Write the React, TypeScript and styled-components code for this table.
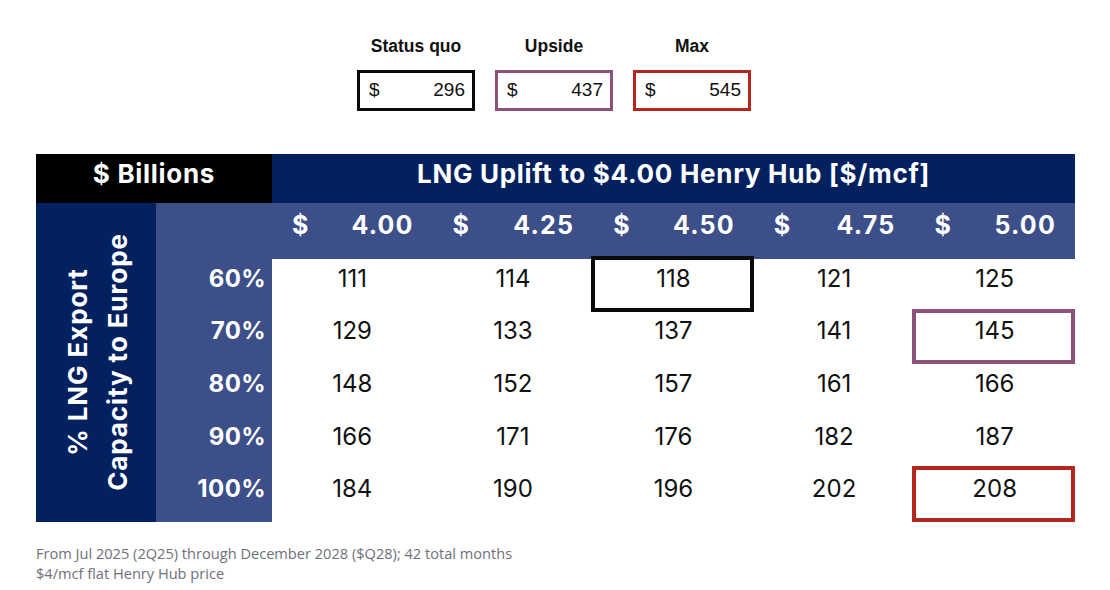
import React from 'react';
import styled, { createGlobalStyle } from 'styled-components';

const GlobalStyle = createGlobalStyle`
  html, body {
    margin: 0;
    padding: 0;
    background: #ffffff;
  }
  body {
    font-family: Inter, "Liberation Sans", sans-serif;
  }
`;

const Page = styled.div`
  width: 1110px;
  height: 590px;
  box-sizing: border-box;
  padding: 36px 0 0 36px;
  display: flex;
  flex-direction: column;
`;

const Legend = styled.div`
  display: flex;
  gap: 20px;
  margin-left: 321px;
`;

const LegendItem = styled.div`
  display: flex;
  flex-direction: column;
  align-items: center;
  gap: 14px;
`;

const LegendLabel = styled.div`
  font-family: "Liberation Sans", Arial, sans-serif;
  font-weight: 700;
  font-size: 17.5px;
  line-height: 20px;
  color: #111;
`;

const LegendBox = styled.div<{ $color: string }>`
  width: 118px;
  height: 41px;
  box-sizing: border-box;
  border: 3px solid ${(p) => p.$color};
  display: flex;
  justify-content: space-between;
  align-items: center;
  padding: 0 7px 2px 9px;
  font-family: "Liberation Sans", Arial, sans-serif;
  font-size: 19px;
  color: #111;
`;

const Table = styled.div`
  margin-top: 43px;
  width: 1039px;
  display: grid;
  grid-template-columns: 120px 116px repeat(5, 160.6px);
  grid-template-rows: 49px 56px repeat(5, 52.6px);
`;

const Cell = styled.div<{ $bg?: string; $align?: 'left' | 'center' | 'right' }>`
  position: relative;
  background: ${(p) => p.$bg || '#ffffff'};
  display: flex;
  align-items: center;
  justify-content: ${(p) =>
    p.$align === 'right' ? 'flex-end' : p.$align === 'left' ? 'flex-start' : 'center'};
  box-sizing: border-box;
  padding-bottom: 14px;
`;

const TitleCell = styled(Cell)<{ $span: string }>`
  grid-column: ${(p) => p.$span};
  color: #ffffff;
  font-weight: 700;
  font-size: 26px;
  letter-spacing: 0.7px;
  padding-bottom: 11px;
`;

const SideCell = styled.div`
  grid-column: 1;
  grid-row: 2 / span 6;
  background: #03215f;
  display: flex;
  align-items: center;
  justify-content: center;
`;

const SideText = styled.div`
  transform: rotate(-90deg);
  white-space: nowrap;
  text-align: center;
  color: #ffffff;
  font-weight: 700;
  font-size: 26px;
  letter-spacing: 0.9px;
  line-height: 40px;
  padding-top: 4px;
`;

const PriceHead = styled(Cell)`
  background: #3c4f88;
  color: #ffffff;
  font-weight: 700;
  font-size: 25px;
  letter-spacing: 1.2px;
  justify-content: space-between;
  padding: 0 19px 13px 20px;
`;

const RowHead = styled(Cell)`
  background: #3c4f88;
  color: #ffffff;
  font-weight: 700;
  font-size: 24px;
  letter-spacing: 0.4px;
  padding-right: 6px;
`;

const DataCell = styled(Cell)<{ $mark?: string }>`
  font-size: 24px;
  font-weight: 400;
  color: #111;
  &::after {
    content: '';
    display: ${(p) => (p.$mark ? 'block' : 'none')};
    position: absolute;
    top: -3px;
    left: -2px;
    right: 0;
    bottom: 0;
    border: 4px solid ${(p) => p.$mark || 'transparent'};
  }
`;

const Notes = styled.div`
  margin-top: 21px;
  font-family: "Open Sans", "Noto Sans", sans-serif;
  font-size: 14.6px;
  line-height: 20px;
  color: #6e707b;
`;

const BLACK = '#0a0a0a';
const PURPLE = '#8c5079';
const RED = '#b3261b';

const prices = ['4.00', '4.25', '4.50', '4.75', '5.00'];
const rows = [
  { label: '60%', values: ['111', '114', '118', '121', '125'] },
  { label: '70%', values: ['129', '133', '137', '141', '145'] },
  { label: '80%', values: ['148', '152', '157', '161', '166'] },
  { label: '90%', values: ['166', '171', '176', '182', '187'] },
  { label: '100%', values: ['184', '190', '196', '202', '208'] },
];

const marks: Record<string, string> = {
  '0-2': BLACK,
  '1-4': PURPLE,
  '4-4': RED,
};

const legend = [
  { label: 'Status quo', value: '296', color: BLACK },
  { label: 'Upside', value: '437', color: PURPLE },
  { label: 'Max', value: '545', color: RED },
];

export default function App() {
  return (
    <>
      <GlobalStyle />
      <Page>
        <Legend>
          {legend.map((l) => (
            <LegendItem key={l.label}>
              <LegendLabel>{l.label}</LegendLabel>
              <LegendBox $color={l.color}>
                <span>$</span>
                <span>{l.value}</span>
              </LegendBox>
            </LegendItem>
          ))}
        </Legend>

        <Table>
          <TitleCell $span="1 / span 2" $bg="#000000">
            $ Billions
          </TitleCell>
          <TitleCell $span="3 / span 5" $bg="#03215f">
            LNG Uplift to $4.00 Henry Hub [$/mcf]
          </TitleCell>

          <SideCell>
            <SideText>
              % LNG Export
              <br />
              Capacity to Europe
            </SideText>
          </SideCell>
          <Cell $bg="#3c4f88" />
          {prices.map((p) => (
            <PriceHead key={p}>
              <span>$</span>
              <span>{p}</span>
            </PriceHead>
          ))}

          {rows.map((r, ri) => (
            <React.Fragment key={r.label}>
              <RowHead $align="right">{r.label}</RowHead>
              {r.values.map((v, ci) => (
                <DataCell key={ci} $mark={marks[`${ri}-${ci}`]}>
                  {v}
                </DataCell>
              ))}
            </React.Fragment>
          ))}
        </Table>

        <Notes>
          From Jul 2025 (2Q25) through December 2028 ($Q28); 42 total months
          <br />
          $4/mcf flat Henry Hub price
        </Notes>
      </Page>
    </>
  );
}
